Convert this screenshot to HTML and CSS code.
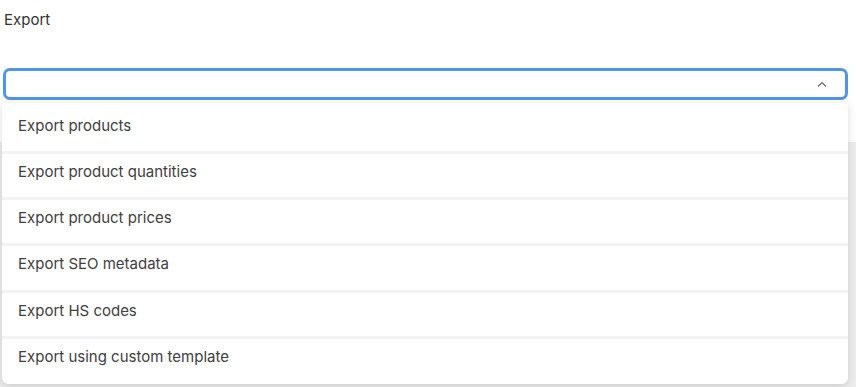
FILE: index.html
```html
<!DOCTYPE html>
<html lang="en">
<head>
<meta charset="utf-8">
<link rel="stylesheet" href="styles.css">
<title>Export</title>
</head>
<body>
<div class="field">
  <div class="label">Export</div>
  <div class="select">
    <div class="value"></div>
    <svg class="chev" width="10" height="6" viewBox="0 0 10 6"><path d="M1 5.5 L5 1.5 L9 5.5" fill="none" stroke="#6b6b6b" stroke-width="1.2"/></svg>
  </div>
  <ul class="menu">
    <li class="item">Export products</li>
    <li class="item">Export product quantities</li>
    <li class="item">Export product prices</li>
    <li class="item">Export SEO metadata</li>
    <li class="item">Export HS codes</li>
    <li class="item">Export using custom template</li>
  </ul>
</div>
<div class="underlay"></div>
</body>
</html>
```
FILE: styles.css
```css
html, body {
  margin: 0;
  padding: 0;
  background: #ffffff;
  width: 856px;
  height: 387px;
  overflow: hidden;
}
body {
  font-family: Inter, "Noto Sans", sans-serif;
  color: #333333;
}
.field {
  padding: 11px 0 0 0;
  position: relative;
  z-index: 1;
}
.label {
  font-size: 15px;
  line-height: 18px;
  padding-left: 4px;
  color: #333;
}
.select {
  margin: 39px 8px 0 3px;
  height: 26px;
  border: 3px solid #4f94ee;
  border-radius: 7px;
  display: flex;
  align-items: center;
  justify-content: flex-end;
  padding-right: 18px;
  background: #fff;
}
.chev { display: block; }
.underlay {
  margin-top: 42px;
  height: 260px;
  background: #ececec;
}
.menu {
  position: absolute;
  top: 103px;
  left: 2px;
  right: 8px;
  list-style: none;
  margin: 0;
  padding: 0;
  background: #f3f3f4;
  border-radius: 0 0 7px 7px;
  box-shadow: 0 2px 8px rgba(0,0,0,0.14);
  display: flex;
  flex-direction: column;
  gap: 3px;
  overflow: hidden;
}
.item {
  box-sizing: border-box;
  background: #ffffff;
  height: 43.2px;
  display: flex;
  align-items: flex-start;
  padding: 8px 0 0 16px;
  line-height: 20px;
  font-size: 15px;
  color: #404040;
}
.item:first-child {
  height: 48px;
  padding-top: 13px;
}
.item:last-child {
  height: 45px;
}
```
